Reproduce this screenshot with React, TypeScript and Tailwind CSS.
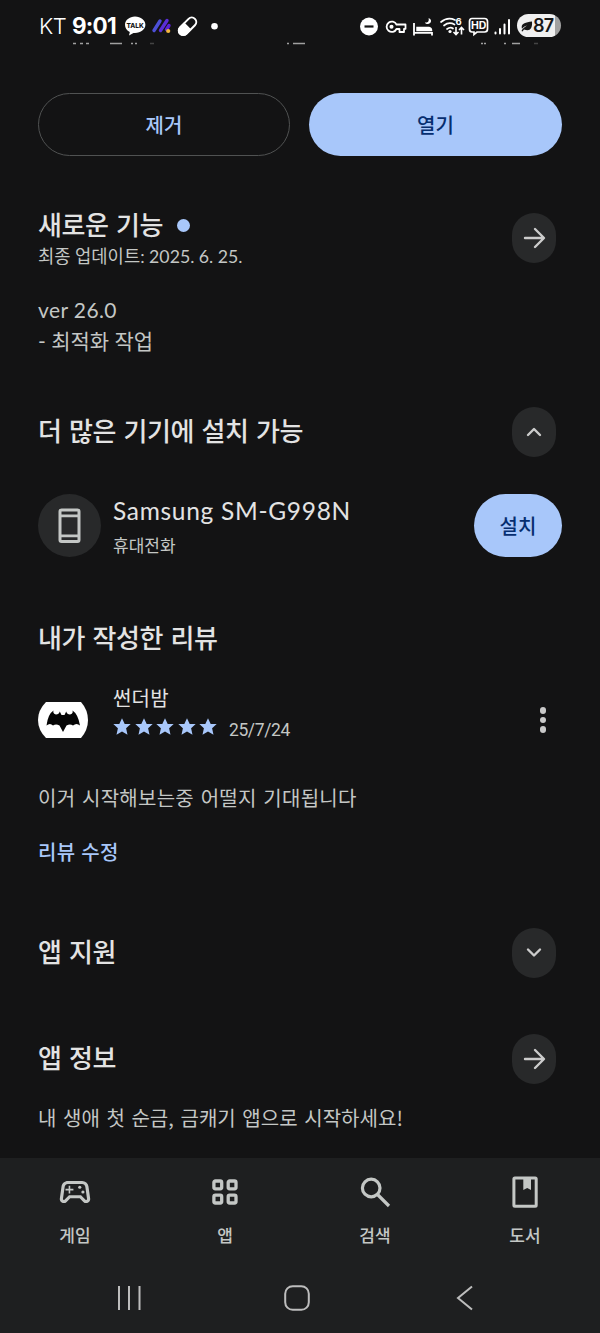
import React from 'react';
import { MdOutlineSportsEsports } from 'react-icons/md';

interface RoundButtonProps {
  label: string;
  path: string;
}

interface Tab {
  id: string;
  label: string;
  icon: React.ReactNode;
}

const ARROW = 'M13 25H31M23 16L32 25L23 34';
const CHEVRON_UP = 'M16 28L22 22L28 28';
const CHEVRON_DOWN = 'M16 21.5L22 27.5L28 21.5';

const RoundButton: React.FC<RoundButtonProps> = ({ label, path }) => (
  <button aria-label={label} className="h-[50px] w-11 shrink-0 rounded-full bg-[#28292a]">
    <svg width="44" height="50" viewBox="0 0 44 50" fill="none" stroke="#cccccc" strokeWidth="2.4" strokeLinecap="round" strokeLinejoin="round">
      <path d={path} />
    </svg>
  </button>
);

const StatusBar: React.FC = () => (
  <header className="flex h-[42px] shrink-0 items-start justify-between pt-[11px] pl-[39px] pr-[39px] font-['Inter',sans-serif] text-white">
    <div className="flex h-[30px] items-center">
      <span className="w-[33px] text-[22px] font-light leading-[30px] tracking-[-0.6px]">KT</span>
      <span className="w-[53px] text-[22.5px] font-bold leading-[30px] tracking-[-0.8px]">9:01</span>
      <svg width="96" height="28" viewBox="0 0 96 28">
        <path d="M10 4.500C4.500 4.500 0 8.100 0 12.800C0 16 1.800 18.500 4.800 20L4 23.500L8.500 21H10C15.800 21 20.400 17.400 20.400 12.800S15.800 4.500 10 4.500Z" fill="#fff" />
        <text x="10.200" y="15.500" textAnchor="middle" fontSize="6.500" fontWeight="800" fill="#161616">TALK</text>
        <g strokeWidth="3.400" strokeLinecap="round">
          <path d="M29 18.500L35 9" stroke="#4d50d6" />
          <path d="M35.500 18.500L42 8.500" stroke="#5a2ed6" />
          <path d="M41.500 17.500L44 13.500" stroke="#5a20d6" />
        </g>
        <circle cx="43.200" cy="19" r="2.100" fill="#f5b83c" />
        <g transform="translate(62.500 14.300) rotate(45)">
          <rect x="-4.500" y="-10.500" width="9" height="21" rx="4.500" fill="none" stroke="#fff" strokeWidth="2" />
          <path d="M-5.300 -0.500H5.300V6A5.300 5.300 0 0 1 -5.300 6Z" fill="#fff" />
        </g>
        <circle cx="89.500" cy="14.300" r="3.300" fill="#fff" />
      </svg>
    </div>
    <div className="flex h-[30px] items-center">
      <svg width="157" height="28" viewBox="0 0 157 28" fill="none" stroke="#fff" strokeWidth="1.500">
        <circle cx="9" cy="14.500" r="9" fill="#fff" stroke="none" />
        <path d="M4.500 14.500H13.500" stroke="#151515" strokeWidth="2.200" />
        <path d="M36.500 12.500A5.200 5.200 0 1 0 36.500 17H39.500V20H44V16.800H45.500V12.500Z" strokeWidth="1.800" strokeLinejoin="round" />
        <circle cx="31.500" cy="14.700" r="1.300" fill="#fff" />
        <path d="M54 11V23.500M54 20.800H72V23.500" strokeWidth="1.800" />
        <path d="M57 15.500H69Q71.500 16 71.500 18.500H57Z" fill="#fff" />
        <path d="M68.500 6.200C69.500 9.200 67.500 11 64.800 10.400C66.500 13.300 71.500 12 71 8.500C70.800 7.200 69.800 6.500 68.500 6.200Z" fill="#fff" stroke="none" />
        <path d="M81 10Q87.500 4.500 95 8M84 13.500Q89 9.500 94.500 12.500M87 17Q90.500 14.500 93 16.500" strokeWidth="1.700" strokeLinecap="round" />
        <circle cx="90" cy="19.500" r="1.600" fill="#fff" stroke="none" />
        <text x="95.600" y="12.800" fontSize="9.500" fontWeight="700" fill="#fff" stroke="none">6</text>
        <path d="M96 15V22M93.500 20L96 22.500L98.500 20M101.500 22.500V15.500M99 18L101.500 15.500L104 18" strokeWidth="1.600" />
        <path d="M112 6.500H124.500Q127.500 6.500 127.500 9.500V17Q127.500 20 124.500 20H117L114 22.500V20H112Q109.500 20 109.500 17V9.500Q109.500 6.500 112 6.500Z" strokeWidth="1.700" />
        <text x="118.600" y="17" textAnchor="middle" fontSize="10.500" fontWeight="700" fill="#fff" stroke="none">HD</text>
        <g strokeWidth="2" strokeLinecap="round">
          <path d="M135.500 21.500V20.500M140 21.500V17M144.500 21.500V12.500M149 21.500V8" />
        </g>
      </svg>
      <div className="-mt-px flex h-[23px] w-11 items-center rounded-full bg-[linear-gradient(90deg,#f0f0f0_87%,#a1a1a1_87%)] pl-1 text-[#171717]">
        <svg width="12" height="14" viewBox="0 0 12 14">
          <path d="M0.500 12C1.500 9.500 3.500 8 6 6.500C4 7 2 8.200 1 9.700C-0.500 5 3.500 3.500 11 2.500C11.500 9 9.500 13 3 10.500L1.500 12.500Z" fill="#171717" />
        </svg>
        <span className="text-[18px] font-semibold leading-[23px] tracking-[-0.7px]">87</span>
      </div>
    </div>
  </header>
);

const Star: React.FC = () => (
  <svg width="18" height="18" viewBox="0 0 18 18">
    <path d="M9 0.300L11.700 6H17.700L13.100 10.300L14.500 16.800L9 13.400L3.500 16.800L4.900 10.300L0.300 6H6.300Z" fill="#a8c7fa" />
  </svg>
);

const tabs: Tab[] = [
  { id: 'games', label: '게임', icon: <MdOutlineSportsEsports size={38} /> },
  {
    id: 'apps',
    label: '앱',
    icon: (
      <svg width="38" height="38" viewBox="0 0 38 38" fill="none" stroke="currentColor" strokeWidth="3.300">
        <rect x="7.900" y="8" width="7.800" height="7.800" rx="1.500" />
        <rect x="22.200" y="8" width="7.800" height="7.800" rx="1.500" />
        <rect x="7.900" y="22.200" width="7.800" height="7.800" rx="1.500" />
        <rect x="22.200" y="22.200" width="7.800" height="7.800" rx="1.500" />
      </svg>
    ),
  },
  {
    id: 'search',
    label: '검색',
    icon: (
      <svg width="38" height="38" viewBox="0 0 38 38" fill="none" stroke="currentColor" strokeWidth="3.200">
        <circle cx="15.200" cy="15" r="8.800" />
        <path d="M21.500 21.500L33 33" />
      </svg>
    ),
  },
  {
    id: 'books',
    label: '도서',
    icon: (
      <svg width="38" height="38" viewBox="0 0 38 38" fill="none" stroke="currentColor" strokeWidth="3">
        <rect x="7.900" y="5" width="22.300" height="28.300" rx="1" />
        <path d="M17.300 5H25V17L21.200 15L17.300 17Z" fill="currentColor" stroke="none" />
      </svg>
    ),
  },
];

const App: React.FC = () => {
  return (
    <div className="flex h-[1333px] w-[600px] flex-col overflow-hidden bg-[#131314] font-['Noto_Sans_CJK_KR',sans-serif] text-[#c4c7c5]">
      <StatusBar />

      {/* tail of the description scrolled under the status bar */}
      <svg className="h-[3px] w-full shrink-0" viewBox="0 0 600 3" fill="none" stroke="#a0a0a0" strokeWidth="1.500">
        <path d="M73 1.500h3M80 1.500h3M86 1.500h3M110 1.500h12M131 1.500h2M135 1.500h2M287 1.500h2M293 1.500h12M481 1.500h2M484 1.500h2M504 1.500h2M512 1.500h8" />
        <path d="M150 1.500h4M534 1.500h4" stroke="#444" />
      </svg>

      <main className="flex h-[1113px] shrink-0 flex-col pl-[38px] pr-[38px] pt-12">
        <div className="flex shrink-0 justify-between text-[20px] font-medium">
          <button className="h-[63px] w-[252px] rounded-full border-[1.5px] border-[#505252] text-[#a8c7fa]">제거</button>
          <button className="h-[63px] w-[253px] rounded-full bg-[#a8c7fa] text-[#062e6f]">열기</button>
        </div>

        <section className="mt-[53px] h-[198px] shrink-0">
          <div className="flex h-16 items-start justify-between pr-1.5">
            <div>
              <div className="flex h-[30px] items-center gap-[14px]">
                <h2 className="text-[26px] font-medium leading-[30px] tracking-[-0.4px] text-[#e3e3e3] [word-spacing:2px]">새로운 기능</h2>
                <span className="mt-0.5 h-[13px] w-[13px] rounded-full bg-[#a8c7fa]"></span>
              </div>
              <p className="pt-px font-['Lato','Noto_Sans_CJK_KR',sans-serif] text-[17.7px] leading-[34px]">최종 업데이트: 2025. 6. 25.</p>
            </div>
            <div className="mt-1">
              <RoundButton label="새로운 기능 보기" path={ARROW} />
            </div>
          </div>
          <div className="mt-[21px] font-['Lato','Noto_Sans_CJK_KR',sans-serif] text-[21px] leading-[31px]">
            <p className="tracking-[0.4px]">ver 26.0</p>
            <p>- 최적화 작업</p>
          </div>
        </section>

        <section className="h-[212px] shrink-0">
          <div className="flex items-center justify-between pr-1.5">
            <h2 className="pb-1 text-[26px] font-medium leading-[46px] tracking-[-0.4px] text-[#e3e3e3] [word-spacing:2px]">더 많은 기기에 설치 가능</h2>
            <RoundButton label="접기" path={CHEVRON_UP} />
          </div>
          <div className="mt-[37px] flex h-[63px] items-center">
            <div className="flex h-[63px] w-[63px] items-center justify-center rounded-full bg-[#28292a]">
              <svg width="24" height="36" viewBox="0 0 24 36" fill="none" stroke="#c4c7c5" strokeWidth="3">
                <rect x="2" y="2" width="19" height="31.500" rx="1.500" />
                <path d="M2 7.800H21M2 27.800H21" strokeWidth="2.800" />
              </svg>
            </div>
            <div className="ml-3 grow pt-0.5">
              <p className="font-['Lato','Noto_Sans_CJK_KR',sans-serif] text-[24.5px] leading-9 tracking-[0.7px] text-[#e3e3e3]">Samsung SM-G998N</p>
              <p className="text-[17px] leading-8">휴대전화</p>
            </div>
            <button className="h-[63px] w-22 rounded-full bg-[#a8c7fa] text-[20px] font-medium text-[#062e6f]">설치</button>
          </div>
        </section>

        <section className="h-[309px] shrink-0">
          <h2 className="mb-0.5 text-[26px] font-medium leading-[36px] tracking-[-0.4px] text-[#e3e3e3] [word-spacing:2px]">내가 작성한 리뷰</h2>
          <div className="mt-[27px] flex h-[62px] items-center">
            <svg className="mt-3.5" width="50" height="38" viewBox="0 0 50 38">
              <path d="M8 1H43Q50 9 50 19T43 37H8Q0 29 0 19T8 1Z" fill="#fff" />
              <path d="M15.500 9.500Q14.500 12.500 18 13.500Q21 13.500 21.800 10.500L23.500 14H26.500L28.200 10.500Q29 13.500 32 13.500Q35.500 12.500 34.500 9.500Q40 13 42 24.500Q38.500 21.500 35 24.500Q32 22.500 28.500 24.500L25 31L21.500 24.500Q18 22.500 15 24.500Q12 21.500 8.500 24.500Q10 13 15.500 9.500Z" fill="#050505" />
            </svg>
            <div className="ml-[25px] grow">
              <p className="h-[31px] text-[20px] leading-[31px] tracking-[0.2px] text-[#e3e3e3]">썬더밤</p>
              <div className="flex h-[31px] items-center">
                <div className="-mt-1 flex gap-[3.500px]">
                  {[1, 2, 3, 4, 5].map(n => <Star key={n} />)}
                </div>
                <span className="ml-3 mt-[3px] font-['Roboto',sans-serif] text-[17.5px] leading-6 tracking-[-0.4px]">25/7/24</span>
              </div>
            </div>
            <button aria-label="더보기" className="mr-4 mt-3.5 flex flex-col gap-[3px]">
              <span className="h-[6.500px] w-[6.500px] rounded-full bg-[#c9c9c9]"></span>
              <span className="h-[6.500px] w-[6.500px] rounded-full bg-[#c9c9c9]"></span>
              <span className="h-[6.500px] w-[6.500px] rounded-full bg-[#c9c9c9]"></span>
            </button>
          </div>
          <p className="mt-[39px] text-[20px] leading-[30px] tracking-[0.25px] [word-spacing:2px]">이거 시작해보는중 어떨지 기대됩니다</p>
          <button className="mt-6 block text-[20px] font-medium leading-[30px] tracking-[0.3px] text-[#a8c7fa] [word-spacing:1px]">리뷰 수정</button>
        </section>

        <section className="flex h-[106px] shrink-0 items-start justify-between pr-1.5">
          <h2 className="text-[26px] font-medium leading-[46px] tracking-[-0.4px] text-[#e3e3e3] [word-spacing:2px]">앱 지원</h2>
          <RoundButton label="펼치기" path={CHEVRON_DOWN} />
        </section>

        <section className="shrink-0">
          <div className="flex items-center justify-between pr-1.5">
            <h2 className="pb-1 text-[26px] font-medium leading-[46px] tracking-[-0.4px] text-[#e3e3e3] [word-spacing:2px]">앱 정보</h2>
            <RoundButton label="앱 정보 보기" path={ARROW} />
          </div>
          <p className="mt-[19px] text-[20px] leading-[30px] tracking-[0.05px] [word-spacing:2px]">내 생애 첫 순금, 금캐기 앱으로 시작하세요!</p>
        </section>
      </main>

      <footer className="flex grow flex-col bg-[#1e1f20]">
        <nav className="grid h-[105px] grid-cols-4 pt-[15px]">
          {tabs.map(tab => (
            <button key={tab.id} className="flex flex-col items-center">
              {tab.icon}
              <span className="mt-[11px] text-[17px] font-medium leading-[26px]">{tab.label}</span>
            </button>
          ))}
        </nav>
        <div className="flex h-[70px] items-center justify-between pl-[117px] pr-[126px]">
          <svg width="25" height="26" viewBox="0 0 25 26" stroke="#bdbdbd" strokeWidth="2">
            <path d="M2 1V25M12 1V25M22.500 1V25" />
          </svg>
          <svg className="mr-[5px]" width="26" height="26" viewBox="0 0 26 26" fill="none" stroke="#bdbdbd" strokeWidth="2">
            <rect x="1.200" y="1.200" width="23.600" height="23.600" rx="7.500" />
          </svg>
          <svg width="18" height="26" viewBox="0 0 18 26" fill="none" stroke="#bdbdbd" strokeWidth="2">
            <path d="M16 1.500L2 13L16 24.500" />
          </svg>
        </div>
      </footer>
    </div>
  );
};

export default App;
